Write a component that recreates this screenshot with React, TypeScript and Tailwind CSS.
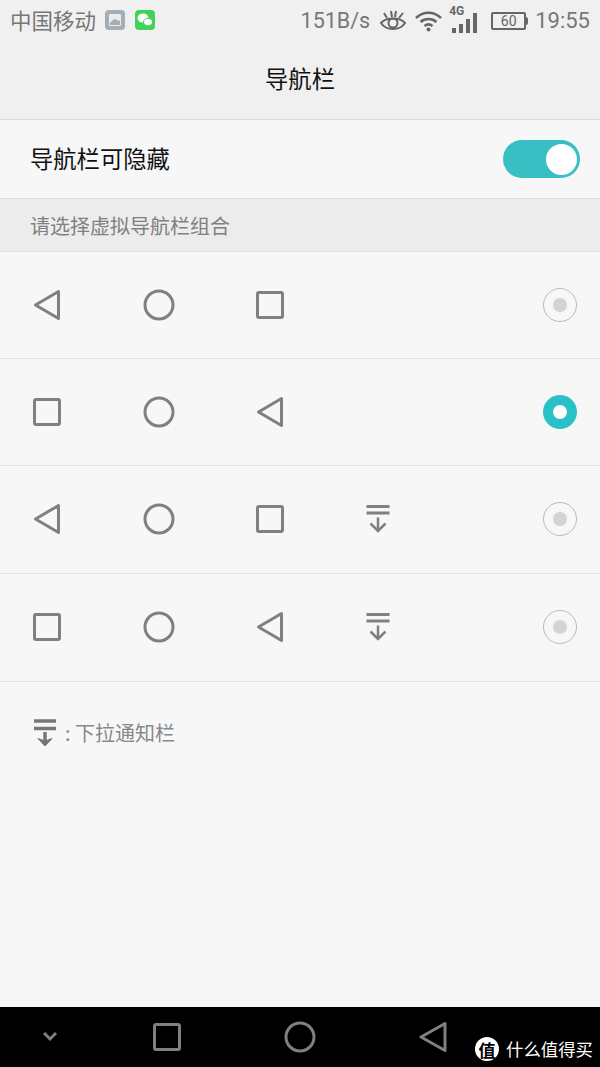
function Tri({ c = "#808080" }: { c?: string }) {
  return (
    <svg width="34" height="34" viewBox="0 0 34 34" fill="none" stroke={c} strokeWidth="3" strokeLinejoin="round">
      <path d="M5.5 17 L28.5 3.5 V30.5 Z" />
    </svg>
  );
}
function Circ() {
  return (
    <svg width="34" height="34" viewBox="0 0 34 34" fill="none" stroke="#808080" strokeWidth="3">
      <circle cx="17" cy="17" r="14" />
    </svg>
  );
}
function Sq() {
  return (
    <svg width="34" height="34" viewBox="0 0 34 34" fill="none" stroke="#808080" strokeWidth="3" strokeLinejoin="round">
      <rect x="4.5" y="4.5" width="25" height="25" rx="1.5" />
    </svg>
  );
}
function Drop() {
  return (
    <svg width="34" height="34" viewBox="0 0 34 34" fill="none" stroke="#808080" strokeWidth="2.5" className="-ml-[3px]">
      <path d="M4.5 4.5 H27.5 M4.5 11 H27.5" strokeWidth="3" />
      <path d="M16 15.5 V29 M8.5 21.5 L16 29 L23.5 21.5" />
    </svg>
  );
}
function Radio({ on }: { on?: boolean }) {
  return on ? (
    <div className="flex h-[34px] w-[34px] items-center justify-center rounded-full bg-[#29c0c8]">
      <div className="h-[14px] w-[14px] rounded-full bg-white" />
    </div>
  ) : (
    <div className="flex h-[34px] w-[34px] items-center justify-center rounded-full border border-[#bbbbbb]">
      <div className="h-[14px] w-[14px] rounded-full bg-[#d4d4d4]" />
    </div>
  );
}
function Row({ items, on, h }: { items: React.ReactNode[]; on?: boolean; h: string }) {
  return (
    <div className={`flex items-center justify-between border-b border-[#e4e4e4] pl-[30px] pr-[23px] ${h}`}>
      <div className="flex items-center gap-[77.5px]">{items.map((x, i) => <div key={i} className="h-[34px] w-[34px]">{x}</div>)}</div>
      <Radio on={on} />
    </div>
  );
}

const cjk = "font-['Noto_Sans_CJK_SC','Noto_Sans',sans-serif]";

export default function App() {
  return (
    <div className={`flex h-[1067px] w-[600px] flex-col overflow-hidden bg-[#f7f7f7] ${cjk}`}>
      <div className="flex h-[120px] flex-col border-b border-[#d8d8d8] bg-[#f0f0f0]">
        <div className="flex h-[41px] items-center justify-between pl-[10px] pr-[10px] text-[#777777]">
          <div className="flex items-center pb-[1px]">
            <span className="text-[21.5px] leading-none">中国移动</span>
            <svg width="20" height="20" viewBox="0 0 20 20" className="ml-[9px]">
              <rect width="20" height="20" rx="4" fill="#a5adb5" />
              <rect x="4" y="4" width="12" height="12" rx="1" fill="#e9ebee" />
              <path d="M5 13 L9 9 L15 11 V15 H5 Z" fill="#a5adb5" />
            </svg>
            <svg width="20" height="20" viewBox="0 0 20 20" className="ml-[10px]">
              <rect width="20" height="20" rx="4" fill="#42d258" />
              <ellipse cx="8" cy="8" rx="5.5" ry="4.5" fill="#fff" />
              <ellipse cx="13" cy="12" rx="4.5" ry="3.8" fill="#fff" stroke="#42d258" />
            </svg>
          </div>
          <div className="flex items-center font-['Roboto',sans-serif] text-[22px] leading-none">
            <span className="text-[21.5px]">151B/s</span>
            <svg width="28" height="22" viewBox="0 0 28 22" fill="none" stroke="#666" strokeWidth="2" className="ml-[9px]">
              <path d="M2 13 C7 7 21 7 26 13 C21 21 7 21 2 13 Z" />
              <circle cx="14" cy="13" r="4.5" />
              <path d="M5 3 L8 8 M12 1 L13 7 M17 1 L16 7 M24 3 L20 8" />
            </svg>
            <svg width="30" height="22" viewBox="0 0 30 22" fill="none" stroke="#666" strokeWidth="2.5" className="ml-[6px]">
              <path d="M3 8 C10 1 21 1 28 8 M7.5 12 C12 8 19 8 23.5 12 M11.5 16 C14 14 17 14 19.5 16" />
              <circle cx="15.5" cy="19.5" r="2" fill="#666" stroke="none" />
            </svg>
            <div className="relative ml-[6px] h-[26px] w-[27px]">
              <span className="absolute -top-[3px] left-0 text-[12px] font-bold leading-none text-[#666]">4G</span>
              <div className="absolute bottom-[1px] left-[3px] flex items-end gap-[3px]">
                <div className="h-[5px] w-[4px] bg-[#666]" />
                <div className="h-[9px] w-[4px] bg-[#666]" />
                <div className="h-[14px] w-[4px] bg-[#666]" />
                <div className="h-[20px] w-[4px] bg-[#666]" />
              </div>
            </div>
            <div className="ml-[15px] flex items-center">
              <div className="flex h-[18px] w-[35px] items-center justify-center rounded-[2px] border-2 border-[#666] text-[14px] text-[#666]">60</div>
              <div className="h-[8px] w-[2px] rounded-r bg-[#666]" />
            </div>
            <span className="ml-[7px]">19:55</span>
          </div>
        </div>
        <div className="flex flex-1 items-center justify-center pb-[3px] text-[23.3px] leading-none text-[#111111]">导航栏</div>
      </div>

      <div className="flex h-[78px] items-center justify-between pl-[30px] pr-[20px]">
        <span className="text-[23.3px] leading-none text-[#111111]">导航栏可隐藏</span>
        <div className="flex h-[38px] w-[77px] items-center justify-end rounded-full bg-[#38bfc4] pr-[3px]">
          <div className="h-[31px] w-[31px] rounded-full bg-white" />
        </div>
      </div>
      <div className="flex h-[54px] items-center border-y border-[#e0e0e0] bg-[#ececec] pl-[30px] pt-[1px] text-[20px] leading-none text-[#808080]">
        请选择虚拟导航栏组合
      </div>

      <Row h="h-[107px]" items={[<Tri />, <Circ />, <Sq />]} />
      <Row h="h-[107px]" on items={[<Sq />, <Circ />, <Tri />]} />
      <Row h="h-[108px] pb-[1px]" items={[<Tri />, <Circ />, <Sq />, <Drop />]} />
      <Row h="h-[108px] pb-[1px]" items={[<Sq />, <Circ />, <Tri />, <Drop />]} />

      <div className="flex h-[104px] items-center pl-[34px] pb-[2px] text-[20px] leading-none text-[#888888]">
        <svg width="22" height="28" viewBox="0 0 22 28">
          <path d="M0 2 H22 M0 9.5 H22" stroke="#777" strokeWidth="3.5" fill="none" />
          <path d="M11 13 V22" stroke="#777" strokeWidth="3.5" fill="none" />
          <path d="M4 19.5 L11 27 L18 19.5 L11 22 Z" fill="#777" stroke="#777" strokeLinejoin="round" />
        </svg>
        <span className="ml-[9px]">: 下拉通知栏</span>
      </div>

      <div className="flex-1" />

      <div className="relative flex h-[60px] items-center bg-black">
        <svg width="18" height="12" viewBox="0 0 18 12" fill="none" stroke="#808080" strokeWidth="3" className="ml-[41px]">
          <path d="M3 2 L9 8 L15 2" />
        </svg>
        <svg width="28" height="28" viewBox="0 0 28 28" fill="none" stroke="#808080" strokeWidth="3" strokeLinejoin="round" className="ml-[94px]">
          <rect x="1.5" y="1.5" width="25" height="25" rx="1.5" />
        </svg>
        <svg width="32" height="32" viewBox="0 0 32 32" fill="none" stroke="#808080" strokeWidth="3" className="ml-[103px]">
          <circle cx="16" cy="16" r="14" />
        </svg>
        <svg width="28" height="32" viewBox="0 0 28 32" fill="none" stroke="#808080" strokeWidth="3" strokeLinejoin="round" className="ml-[103px]">
          <path d="M2 16 L26 2.5 V29.5 Z" />
        </svg>
        <div className="absolute left-[475px] top-[30px] flex items-center">
          <div className="flex h-[24px] w-[24px] items-center justify-center rounded-full bg-white text-[17px] font-bold leading-none text-black">值</div>
          <span className="ml-[7px] text-[17.4px] leading-none text-white">什么值得买</span>
        </div>
      </div>
    </div>
  );
}
